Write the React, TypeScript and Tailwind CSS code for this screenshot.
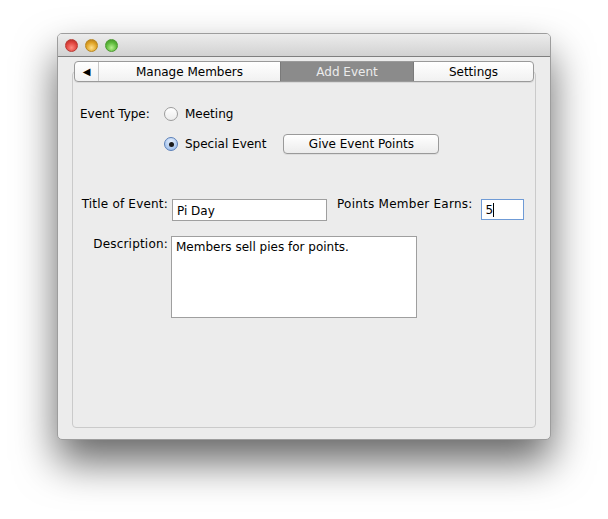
import { useState } from "react";

const font = { fontFamily: '"DejaVu Sans", "Liberation Sans", sans-serif' };

function Light({ c }: { c: string }) {
  return <div className={`w-[13px] h-[13px] rounded-full ${c}`} />;
}

function Radio({ on, label, onClick }: { on: boolean; label: string; onClick: () => void }) {
  return (
    <button onClick={onClick} className="flex items-center gap-[7px] h-[20px]">
      <span
        className={`w-[14px] h-[14px] rounded-full border flex items-center justify-center ${
          on
            ? "border-[#5a7fb8] bg-[radial-gradient(circle_at_50%_30%,#e4eefc,#a9c6ee_70%,#8fb3e6)]"
            : "border-[#9c9c9c] bg-gradient-to-b from-white to-[#ececec]"
        }`}
      >
        {on && <span className="w-[5px] h-[5px] rounded-full bg-[#1b1b1b]" />}
      </span>
      <span className="text-[12px] text-black">{label}</span>
    </button>
  );
}

export default function App() {
  const [type, setType] = useState<"meeting" | "special">("special");
  const [title, setTitle] = useState("Pi Day");
  const [desc, setDesc] = useState("Members sell pies for points.");

  return (
    <div className="w-[608px] h-[519px] bg-white pt-[33px] pl-[57px]" style={font}>
      <div className="w-[494px] h-[407px] rounded-[5px] overflow-hidden bg-[#ececec] border border-[#9d9d9d] shadow-[0_22px_42px_rgba(0,0,0,0.6)] flex flex-col">
        {/* Title bar */}
        <div className="h-[23px] shrink-0 bg-gradient-to-b from-[#ececec] to-[#d2d2d2] border-b border-[#7f7f7f] flex items-center gap-[7px] pl-[7px]">
          <Light c="bg-[radial-gradient(circle_at_50%_70%,#ff8a80,#e0443e_55%,#a8251f)] border border-[#b83a33]" />
          <Light c="bg-[radial-gradient(circle_at_50%_70%,#ffe08a,#dfa224_55%,#a9721a)] border border-[#b9871f]" />
          <Light c="bg-[radial-gradient(circle_at_50%_70%,#b6f08e,#5cb93b_55%,#3b8a23)] border border-[#4c9a30]" />
        </div>

        {/* Body */}
        <div className="flex-1 flex flex-col px-[14px] pt-[4px] pb-[11px]">
          {/* Tabs */}
          <div className="relative z-10 mx-[2px] h-[21px] flex rounded-[4px] border border-[#9a9a9a] overflow-hidden text-[12px] bg-gradient-to-b from-white to-[#f1f1f1] shadow-[0_1px_0_rgba(0,0,0,0.08)]">
            <div className="w-[24px] flex items-center justify-center border-r border-[#c8c8c8] text-[10px] text-black">◀</div>
            <div className="w-[181px] flex items-center justify-center text-black">Manage Members</div>
            <div className="w-[134px] flex items-center justify-center bg-[#8b8b8b] text-[#ebebeb] border-x border-[#7a7a7a]">Add Event</div>
            <div className="flex-1 flex items-center justify-center text-black">Settings</div>
          </div>

          {/* Panel */}
          <div className="flex-1 -mt-[11px] rounded-[4px] border border-[#cacaca] bg-[#ececec] pt-[32px] pl-[7px] flex flex-col text-[12px] text-black">
            <div className="flex items-center h-[20px]">
              <span className="w-[84px]">Event Type:</span>
              <Radio on={type === "meeting"} label="Meeting" onClick={() => setType("meeting")} />
            </div>
            <div className="flex items-center h-[20px] mt-[10px] pl-[84px]">
              <Radio on={type === "special"} label="Special Event" onClick={() => setType("special")} />
              <button className="ml-[17px] w-[156px] h-[20px] rounded-[4px] border border-[#9a9a9a] bg-gradient-to-b from-white to-[#ececec] text-[12px] text-black shadow-[0_1px_0_rgba(0,0,0,0.06)]">
                Give Event Points
              </button>
            </div>

            <div className="flex items-start mt-[42px]">
              <span className="w-[88px] text-right leading-[16px] tracking-[0.2px]">Title of Event:</span>
              <input
                value={title}
                onChange={e => setTitle(e.target.value)}
                className="ml-[4px] mt-[3px] w-[155px] h-[22px] border border-[#9f9f9f] bg-white px-[4px] pt-[2px] text-[12px] outline-none"
              />
              <span className="ml-[10px] leading-[16px] tracking-[0.25px]">Points Member Earns:</span>
              <div className="ml-[8px] mt-[3px] w-[43px] h-[21px] border border-[#6f9bd6] bg-white px-[4px] flex items-center">
                <span className="leading-none">5</span>
                <span className="w-px h-[14px] bg-black" />
              </div>
            </div>

            <div className="flex items-start mt-[15px]">
              <span className="w-[88px] text-right leading-[16px] tracking-[0.2px]">Description:</span>
              <textarea
                value={desc}
                onChange={e => setDesc(e.target.value)}
                className="ml-[3px] w-[246px] h-[82px] border border-[#9f9f9f] bg-white px-[4px] py-[1px] text-[12px] resize-none outline-none"
              />
            </div>
          </div>
        </div>
      </div>
    </div>
  );
}
